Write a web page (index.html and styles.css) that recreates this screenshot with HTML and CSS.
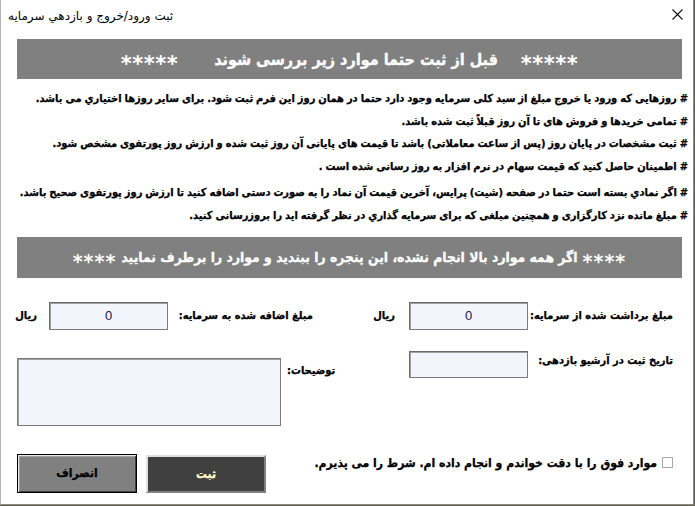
FILE: index.html
```html
<!DOCTYPE html>
<html lang="fa">
<head>
<meta charset="utf-8">
<title>ثبت ورود/خروج و بازدهي سرمايه</title>
<link rel="stylesheet" href="styles.css">
</head>
<body>
<div class="window">
  <div class="titlebar">
    <span class="title" dir="rtl">ثبت ورود/خروج و بازدهي سرمايه</span>
    <svg class="close" width="11" height="11" viewBox="0 0 11 11"><path d="M0.5 0.5 L10.5 10.5 M10.5 0.5 L0.5 10.5" stroke="#111" stroke-width="1.1" fill="none"/></svg>
  </div>
  <div class="content" dir="rtl">
    <div class="banner banner-top"><span class="stars">*****</span><span class="gap-r"></span>قبل از ثبت حتما موارد زیر بررسی شوند<span class="gap-l"></span><span class="stars">*****</span></div>
    <ul class="notes">
      <li># روزهایی که ورود یا خروج مبلغ از سبد کلی سرمایه وجود دارد حتما در همان روز این فرم ثبت شود. برای سایر روزها اختیاري می باشد.</li>
      <li># تمامی خریدها و فروش های تا آن روز قبلاً ثبت شده باشد.</li>
      <li># ثبت مشخصات در پایان روز (پس از ساعت معاملاتی) باشد تا قیمت های پایانی آن روز ثبت شده و ارزش روز پورتفوی مشخص شود.</li>
      <li># اطمینان حاصل کنید که قیمت سهام در نرم افزار به روز رسانی شده است .</li>
      <li class="gap-before"># اگر نمادي بسته است حتما در صفحه (شیت) پرایس، آخرین قیمت آن نماد را به صورت دستی اضافه کنید تا ارزش روز پورتفوی صحیح باشد.</li>
      <li># مبلغ مانده نزد کارگزاری و همچنین مبلغی که برای سرمایه گذاري در نظر گرفته اید را بروزرسانی کنید.</li>
    </ul>
    <div class="banner banner-bottom"><span class="stars stars-sm">****</span><span class="gap-s"></span>اگر همه موارد بالا انجام نشده، این پنجره را ببندید و موارد را برطرف نمایید<span class="gap-s"></span><span class="stars stars-sm">****</span></div>
    <div class="form">
      <div class="row">
        <div class="field field-right">
          <span class="label">مبلغ برداشت شده از سرمایه:</span>
          <span class="input">0</span>
          <span class="unit">ریال</span>
        </div>
        <div class="field field-left">
          <span class="label">مبلغ اضافه شده به سرمایه:</span>
          <span class="input">0</span>
          <span class="unit">ریال</span>
        </div>
      </div>
      <div class="row row2">
        <div class="field field-right">
          <span class="label label-top">تاریخ ثبت در آرشیو بازدهی:</span>
          <span class="input input-date"></span>
        </div>
        <div class="field field-left field-notes">
          <span class="label label-notes">توضیحات:</span>
          <span class="textarea"></span>
        </div>
      </div>
    </div>
    <div class="footer">
      <label class="agree"><span class="checkbox"></span><span>موارد فوق را با دقت خواندم و انجام داده ام. شرط را می پذیرم.</span></label>
      <div class="buttons">
        <button class="btn btn-submit">ثبت</button>
        <button class="btn btn-cancel">انصراف</button>
      </div>
    </div>
  </div>
</div>
</body>
</html>
```

FILE: styles.css
```css
html, body {
  margin: 0;
  padding: 0;
  background: #5e5e52;
}
body {
  width: 695px;
  height: 506px;
  overflow: hidden;
}
.window {
  width: 692px;
  height: 504px;
  background: #ffffff;
  border-left: 1px solid #b4b4b4;
  border-right: 1px solid #8c8c80;
  border-bottom: 1px solid #8c8c80;
  font-family: "DejaVu Sans Condensed", "DejaVu Sans", sans-serif;
  color: #000;
  box-sizing: content-box;
}
.titlebar {
  height: 33px;
  display: flex;
  align-items: center;
  justify-content: space-between;
  padding: 0 10px 0 7px;
}
.title {
  font-family: "DejaVu Sans", sans-serif;
  font-size: 12px;
  color: #000;
  margin-top: -1px;
}
.close {
  margin-top: -5px;
}
.content {
  padding: 6px 11px 0 16px;
}
.banner {
  background: #808080;
  color: #ffffff;
  font-weight: bold;
  text-align: center;
  display: flex;
  align-items: center;
  justify-content: center;
  white-space: nowrap;
  -webkit-text-stroke: 0.3px #ffffff;
}
.banner-top {
  height: 40px;
  font-size: 16px;
}
.banner-bottom {
  height: 41px;
  font-size: 13.8px;
  margin-top: 9px;
}
.stars {
  font-family: "DejaVu Sans", sans-serif;
  font-size: 21px;
  letter-spacing: 0.5px;
  line-height: 1;
  position: relative;
  top: 5px;
  -webkit-text-stroke: 0;
}
.stars-sm {
  font-size: 19px;
  letter-spacing: 1px;
  top: 4px;
}
.gap-r {
  display: inline-block;
  width: 23px;
}
.gap-l {
  display: inline-block;
  width: 36px;
}
.gap-s {
  display: inline-block;
  width: 5px;
}
.notes {
  list-style: none;
  margin: 9px -6px 0 0;
  padding: 0;
  font-size: 11px;
  font-weight: bold;
  line-height: 22.6px;
  word-spacing: -0.5px;
  -webkit-text-stroke: 0.25px #000;
}
.notes li {
  white-space: nowrap;
}
.notes .gap-before {
  margin-top: 4px;
}
.form {
  margin-top: 24px;
}
.row {
  display: flex;
  justify-content: space-between;
}
.field {
  display: flex;
  align-items: center;
}
.label {
  font-size: 11px;
  font-weight: bold;
  white-space: nowrap;
  -webkit-text-stroke: 0.25px #000;
}
.field-right .label {
  width: 145px;
  margin-right: 9px;
}
.field-left .label {
  width: 135px;
  text-align: right;
  margin-left: 10px;
}
.input {
  box-sizing: border-box;
  width: 119px;
  height: 28px;
  background: #f2f5fb;
  border: 1px solid #7a7a7a;
  border-top-color: #6a6a6a;
  border-left-color: #6a6a6a;
  box-shadow: inset 1px 1px 0 #a0a0a0;
  display: flex;
  align-items: center;
  justify-content: center;
  font-family: "Liberation Sans", sans-serif;
  font-size: 13px;
  color: #102050;
}
.unit {
  font-size: 11px;
  font-weight: bold;
  margin-right: 14px;
  width: 20px;
  -webkit-text-stroke: 0.25px #000;
}
.field-left .unit {
  margin-right: 12px;
}
.row2 {
  margin-top: 21px;
  align-items: flex-start;
}
.row2 .field {
  align-items: flex-start;
}
.label-top {
  margin-top: 3px;
}
.input-date {
  height: 27px;
}
.field-notes {
  margin-top: 7px;
}
.label-notes {
  margin-top: 6px;
}
.field-left.field-notes .label {
  width: auto;
  margin-left: 6px;
}
.textarea {
  box-sizing: border-box;
  width: 264px;
  height: 68px;
  background: #f2f5fb;
  border: 1px solid #7a7a7a;
  box-shadow: inset 1px 1px 0 #a0a0a0;
}
.footer {
  margin-top: 28px;
  display: flex;
  justify-content: space-between;
  align-items: flex-start;
}
.agree {
  display: flex;
  align-items: center;
  gap: 5px;
  font-size: 12.1px;
  font-weight: bold;
  margin-top: 2px;
  margin-right: 9px;
  -webkit-text-stroke: 0.25px #000;
}
.checkbox {
  width: 11px;
  height: 11px;
  box-sizing: border-box;
  border: 1px solid #a8a8a8;
  background: #fff;
}
.buttons {
  display: flex;
  gap: 9px;
}
.btn {
  box-sizing: border-box;
  width: 120px;
  height: 39px;
  font-family: "DejaVu Sans Condensed", "DejaVu Sans", sans-serif;
  font-weight: bold;
  font-size: 12px;
  padding: 0;
  margin: 0;
  -webkit-text-stroke: 0.25px currentColor;
}
.btn-submit {
  background: #404040;
  color: #ffffcc;
  border: 2px solid;
  border-color: #e0e0e0 #808080 #808080 #e0e0e0;
  margin-top: 1px;
  height: 38px;
}
.btn-cancel {
  background: #808080;
  color: #000;
  border: 1px solid #000;
  box-shadow: inset 1px 1px 0 #e8e8e8, inset -1px -1px 0 #404040, inset 2px 2px 0 #a0a0a0;
}
```
